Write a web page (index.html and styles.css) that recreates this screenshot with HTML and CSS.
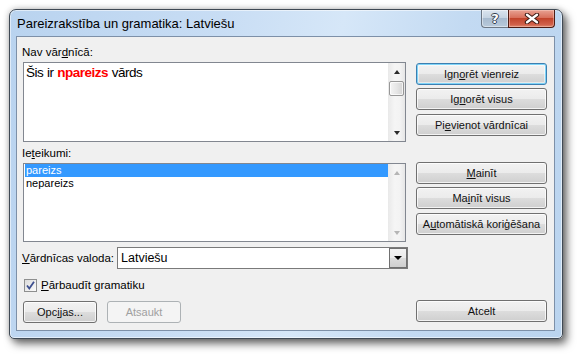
FILE: index.html
```html
<!DOCTYPE html>
<html>
<head>
<meta charset="utf-8">
<link rel="stylesheet" href="styles.css">
</head>
<body>
<div class="window">
  <div class="titlebar">
    <span class="title">Pareizrakstība un gramatika: Latviešu</span>
    <div class="caption-btns">
      <div class="cbtn help"><span class="q">?</span></div>
      <div class="cbtn close">
        <svg width="18" height="11" viewBox="0 0 18 11">
          <path d="M4 1.8 L14 9.2 M14 1.8 L4 9.2" stroke="#3b1a14" stroke-width="4.4" stroke-linecap="round"/>
          <path d="M4 1.8 L14 9.2 M14 1.8 L4 9.2" stroke="#ffffff" stroke-width="2.4" stroke-linecap="round"/>
        </svg>
      </div>
    </div>
  </div>
  <div class="client">
    <div class="left">
      <div class="label first">Nav vār<u>d</u>nīcā:</div>
      <div class="textbox">
        <div class="tb-text">Šis ir <b class="err">npareizs</b> vārds</div>
        <div class="vscroll">
          <div class="arrow up"></div>
          <div class="thumb"></div>
          <div class="track"></div>
          <div class="arrow down"></div>
        </div>
      </div>
      <div class="label second">Ie<u>t</u>eikumi:</div>
      <div class="listbox">
        <div class="items">
          <div class="item sel">pareizs</div>
          <div class="item">nepareizs</div>
        </div>
        <div class="vscroll disabled">
          <div class="arrow up"></div>
          <div class="track"></div>
          <div class="arrow down"></div>
        </div>
      </div>
      <div class="combo-row">
        <span class="label"><u>V</u>ārdnīcas valoda:</span>
        <div class="combo">
          <span class="combo-text">Latviešu</span>
          <div class="drop"><div class="tri"></div></div>
        </div>
      </div>
      <div class="check-row">
        <span class="checkbox">
          <svg width="11" height="11" viewBox="0 0 11 11">
            <path d="M2 5.5 L4.3 8.5 L9 1.8" fill="none" stroke="#3d4f8f" stroke-width="1.8"/>
          </svg>
        </span>
        <span class="check-label"><u>P</u>ārbaudīt gramatiku</span>
      </div>
      <div class="btn-row">
        <div class="btn small">Opc<u>i</u>jas...</div>
        <div class="btn small disabled">Atsaukt</div>
      </div>
    </div>
    <div class="right">
      <div class="btn default g1">Ign<u>o</u>rēt vienreiz</div>
      <div class="btn g2">Ig<u>n</u>orēt visus</div>
      <div class="btn g3">Pi<u>e</u>vienot vārdnīcai</div>
      <div class="btn g4"><u>M</u>ainīt</div>
      <div class="btn g2">Ma<u>i</u>nīt visus</div>
      <div class="btn g3">A<u>u</u>tomātiskā koriģēšana</div>
      <div class="btn cancel">Atcelt</div>
    </div>
  </div>
</div>
</body>
</html>
```

FILE: styles.css
```css
* { box-sizing: border-box; }
html, body { margin: 0; padding: 0; background: #ffffff; }
body {
  width: 578px;
  height: 356px;
  overflow: hidden;
  font-family: "Liberation Sans", Arial, sans-serif;
  font-size: 11px;
  color: #000;
}
u { text-decoration: underline; text-underline-offset: 1px; }

.window {
  margin: 9px 0 0 9px;
  width: 554px;
  height: 330px;
  border: 1px solid #404a55;
  border-radius: 7px 7px 5px 5px;
  background: linear-gradient(100deg, #b9d3ef 0%, #c8ddf4 35%, #d6e7f8 55%, #c3daf2 75%, #bad4ef 100%);
  box-shadow: 4px 5px 9px rgba(0,0,0,0.55), 0 0 6px rgba(0,0,0,0.25), inset 0 0 0 1px rgba(255,255,255,0.55);
  display: flex;
  flex-direction: column;
}

.titlebar {
  height: 26px;
  display: flex;
  align-items: flex-start;
  padding-left: 7px;
  padding-right: 7px;
}
.title {
  font-size: 13px;
  line-height: 16px;
  margin-top: 6px;
  color: #000;
}
.caption-btns {
  margin-left: auto;
  display: flex;
}
.cbtn {
  height: 18px;
  display: flex;
  align-items: center;
  justify-content: center;
}
.help {
  width: 27px;
  border: 1px solid #6c7784;
  border-top: none;
  border-right: none;
  border-radius: 0 0 0 4px;
  background: linear-gradient(#dbe5ef 0%, #c6d4e2 45%, #a8bbcf 50%, #b8cadb 100%);
  box-shadow: inset 0 0 0 1px rgba(255,255,255,0.45);
}
.q {
  font-family: "DejaVu Sans", sans-serif;
  font-weight: bold;
  font-size: 13px;
  line-height: 14px;
  color: #fff;
  text-shadow: -1px 0 #33404f, 1px 0 #33404f, 0 -1px #33404f, 0 1px #33404f;
}
.close {
  width: 47px;
  border: 1px solid #4e1c14;
  border-top: none;
  border-radius: 0 0 4px 0;
  background: linear-gradient(#e8a293 0%, #d8705c 45%, #c2442c 50%, #d0604a 85%, #e08a70 100%);
  box-shadow: inset 0 0 0 1px rgba(255,220,210,0.4);
}

.client {
  height: 295px;
  margin: 0 7px 0 6px;
  background: #f0f0f0;
  border: 1px solid #7d90a8;
  display: flex;
  padding-left: 5px;
}

.left {
  width: 386px;
  display: flex;
  flex-direction: column;
}
.label {
  line-height: 16px;
  height: 16px;
  font-size: 11.5px;
}
.label.first { margin-top: 7px; }
.label.second { margin-top: 3px; }

.textbox {
  margin-top: 2px;
  margin-left: 1px;
  width: 383px;
  height: 80px;
  border: 1px solid #828790;
  background: #fff;
  display: flex;
}
.tb-text {
  flex: 1;
  padding: 2px 0 0 2px;
  font-size: 13.5px;
  line-height: 16px;
  letter-spacing: -0.5px;
  word-spacing: 0.5px;
}
.err { color: #ff0000; font-weight: bold; }

.vscroll {
  width: 17px;
  display: flex;
  flex-direction: column;
  background: linear-gradient(to right, #e9e9e9, #f5f5f5 40%, #f3f3f3 70%, #e6e6e6);
}
.arrow {
  height: 17px;
  display: flex;
  align-items: center;
  justify-content: center;
}
.arrow::before {
  content: "";
  width: 0;
  height: 0;
  border-left: 3.5px solid transparent;
  border-right: 3.5px solid transparent;
}
.arrow.up::before { border-bottom: 4px solid #2a2a2a; }
.arrow.down::before { border-top: 4px solid #2a2a2a; }
.disabled .arrow.up::before { border-bottom-color: #b5b5b5; }
.disabled .arrow.down::before { border-top-color: #b5b5b5; }
.thumb {
  height: 15px;
  margin: 1px 1px 0 1px;
  border: 1px solid #979797;
  border-radius: 2px;
  background: linear-gradient(to right, #f4f4f4, #e6e6e6 50%, #d4d4d4);
  box-shadow: inset 0 0 0 1px rgba(255,255,255,0.7);
}
.track { flex: 1; }

.listbox {
  margin-top: 2px;
  margin-left: 1px;
  width: 383px;
  height: 79px;
  border: 1px solid #828790;
  background: #fff;
  display: flex;
}
.items { flex: 1; padding-left: 1px; }
.item {
  height: 13px;
  line-height: 13px;
  padding-left: 1px;
  font-size: 11px;
  color: #000;
}
.item.sel { background: #3399ff; color: #fff; }

.combo-row {
  margin-top: 5px;
  height: 22px;
  display: flex;
  align-items: center;
}
.combo-row .label { width: 95px; }
.combo {
  width: 291px;
  height: 22px;
  border: 1px solid #7a7a7a;
  background: #fff;
  display: flex;
  align-items: center;
}
.combo-text {
  flex: 1;
  padding-left: 3px;
  font-size: 12.5px;
}
.drop {
  width: 18px;
  height: 20px;
  border: 1px solid #707070;
  background: linear-gradient(#f3f3f3 0%, #ebebeb 50%, #dddddd 50%, #cfcfcf 100%);
  display: flex;
  align-items: center;
  justify-content: center;
}
.tri {
  width: 0;
  height: 0;
  border-left: 4px solid transparent;
  border-right: 4px solid transparent;
  border-top: 4px solid #000;
}

.check-row {
  margin-top: 10px;
  height: 13px;
  display: flex;
  align-items: center;
}
.checkbox {
  margin-left: 2px;
  width: 13px;
  height: 13px;
  border: 1px solid #8e8f8f;
  background: linear-gradient(135deg, #dcdcdc, #fbfbfb);
  display: flex;
  align-items: center;
  justify-content: center;
}
.check-label {
  margin-left: 4px;
  font-size: 11.5px;
  line-height: 13px;
}

.btn-row {
  margin-top: 9px;
  display: flex;
  padding-left: 1px;
  gap: 10px;
}

.btn {
  height: 22px;
  border: 1px solid #707070;
  border-radius: 3px;
  background: linear-gradient(#f2f2f2 0%, #ebebeb 50%, #dddddd 50%, #cfcfcf 100%);
  box-shadow: inset 0 0 0 1px rgba(255,255,255,0.75);
  display: flex;
  align-items: center;
  justify-content: center;
  font-size: 11px;
  color: #111;
  white-space: nowrap;
}
.btn.small { width: 74px; }
.btn.disabled {
  border-color: #adb2b5;
  background: #f4f4f4;
  box-shadow: none;
  color: #a0a0a0;
}
.btn.default {
  border-color: #3c7fb1;
  box-shadow: inset 0 0 0 1px #7fd4f8, inset 0 0 0 2px rgba(255,255,255,0.5);
}

.right {
  margin-left: 8px;
  width: 131px;
  display: flex;
  flex-direction: column;
}
.g1 { margin-top: 26px; }
.g2 { margin-top: 3px; }
.g3 { margin-top: 4px; }
.g4 { margin-top: 26px; }
.cancel { margin-top: 65px; }
```
